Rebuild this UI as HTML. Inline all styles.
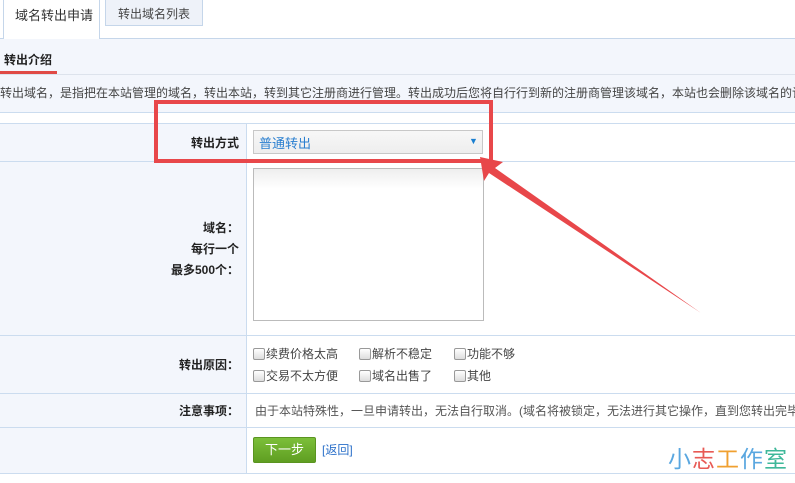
<!DOCTYPE html>
<html><head><meta charset="utf-8"><style>
*{margin:0;padding:0;box-sizing:border-box}
html,body{width:795px;height:483px;overflow:hidden}
body{background:#fff;font-family:"Liberation Sans","Noto Sans CJK SC",sans-serif;font-size:12px;color:#333;position:relative}
.a{position:absolute;white-space:nowrap}
.clip{overflow:hidden}
.lbl{position:absolute;right:556px;font-weight:bold;color:#222;text-align:right}
.cb{display:inline-block;width:12px;height:12px;border:1px solid #999;border-radius:2px;background:linear-gradient(#fff,#ddd);vertical-align:-2px;margin-right:1px}
.hl{position:absolute;left:0;width:795px;height:1px;background:#cbdcef}
</style></head><body>
<div class="a" style="left:0;top:38px;width:795px;height:1px;background:#c5d6ea"></div>
<div class="a" style="left:3px;top:0;width:97px;height:39px;border:1px solid #c5d6ea;border-top:none;border-bottom:none;background:#fff"></div>
<div class="a" style="left:15px;top:5px;font-size:13px;color:#333">域名转出申请</div>
<div class="a" style="left:105px;top:0;width:98px;height:26px;background:#eef2f9;border:1px solid #c5d6ea;border-top:none"></div>
<div class="a" style="left:118px;top:5px;font-size:12px;color:#444">转出域名列表</div>
<div class="a" style="left:0;top:39px;width:795px;height:73px;background:#f3f6fc"></div>
<div class="a" style="left:0;top:74px;width:795px;height:1px;background:#dde3ec"></div>
<div class="a" style="left:4px;top:51px;font-weight:bold;font-size:12px;color:#222">转出介绍</div>
<div class="a" style="left:0;top:71px;width:57px;height:3px;background:#e04a45"></div>
<div class="a clip" style="left:0;top:84px;width:795px;color:#444">转出域名，是指把在本站管理的域名，转出本站，转到其它注册商进行管理。转出成功后您将自行行到新的注册商管理该域名，本站也会删除该域名的记录</div>
<div class="hl" style="top:112px"></div>
<div class="hl" style="top:123px"></div>
<div class="a" style="left:0;top:124px;width:246px;height:349px;background:#f3f6fc"></div>
<div class="a" style="left:246px;top:124px;width:1px;height:349px;background:#cbdcef"></div>
<div class="hl" style="top:161px"></div>
<div class="hl" style="top:335px"></div>
<div class="hl" style="top:393px"></div>
<div class="hl" style="top:427px"></div>
<div class="hl" style="top:473px"></div>
<div class="lbl" style="top:134px">转出方式</div>
<div class="a" style="left:253px;top:130px;width:230px;height:24px;border:1px solid #c8c8c8;background:linear-gradient(#f7f7f7,#eee)"></div>
<div class="a" style="left:259px;top:133px;font-size:13px;color:#2a7fd0">普通转出</div>
<div class="a" style="left:469px;top:136px;font-size:9px;color:#1a7fd0">▼</div>
<div class="lbl" style="top:218px;line-height:21px">域名：<br>每行一个<br>最多500个：</div>
<div class="a" style="left:253px;top:168px;width:231px;height:153px;border:1px solid #bbb;background:linear-gradient(#eee 0,#fff 20px)"></div>
<div class="lbl" style="top:356px">转出原因：</div>
<div class="a" style="left:253px;top:345px;color:#444"><span class="cb"></span>续费价格太高</div>
<div class="a" style="left:359px;top:345px;color:#444"><span class="cb"></span>解析不稳定</div>
<div class="a" style="left:454px;top:345px;color:#444"><span class="cb"></span>功能不够</div>
<div class="a" style="left:253px;top:367px;color:#444"><span class="cb"></span>交易不太方便</div>
<div class="a" style="left:359px;top:367px;color:#444"><span class="cb"></span>域名出售了</div>
<div class="a" style="left:454px;top:367px;color:#444"><span class="cb"></span>其他</div>
<div class="lbl" style="top:402px">注意事项：</div>
<div class="a clip" style="left:255px;top:402px;width:540px;color:#555">由于本站特殊性，一旦申请转出，无法自行取消。(域名将被锁定，无法进行其它操作，直到您转出完毕)</div>
<div class="a" style="left:253px;top:437px;width:63px;height:26px;background:linear-gradient(#7cbf3a,#5f9e22);border:1px solid #5a9420;border-radius:2px;color:#fff;font-size:13px;text-align:center;line-height:24px">下一步</div>
<div class="a" style="left:322px;top:441px;color:#2a6fc9">[返回]</div>
<div class="a" style="left:668px;top:440px;font-size:23px;letter-spacing:1px"><span style="color:#5aa7e0">小</span><span style="color:#e85a55">志</span><span style="color:#f0a030">工</span><span style="color:#5aa7e0">作</span><span style="color:#3fb89a">室</span></div>
<svg class="a" style="left:0;top:0" width="795" height="483">
<rect x="156" y="102" width="335" height="59" fill="none" stroke="#e8474a" stroke-width="4"/>
<polygon points="480,157 503,162 495,168 701,313 489,173 484,181" fill="#e8474a"/>
</svg>
</body></html>
